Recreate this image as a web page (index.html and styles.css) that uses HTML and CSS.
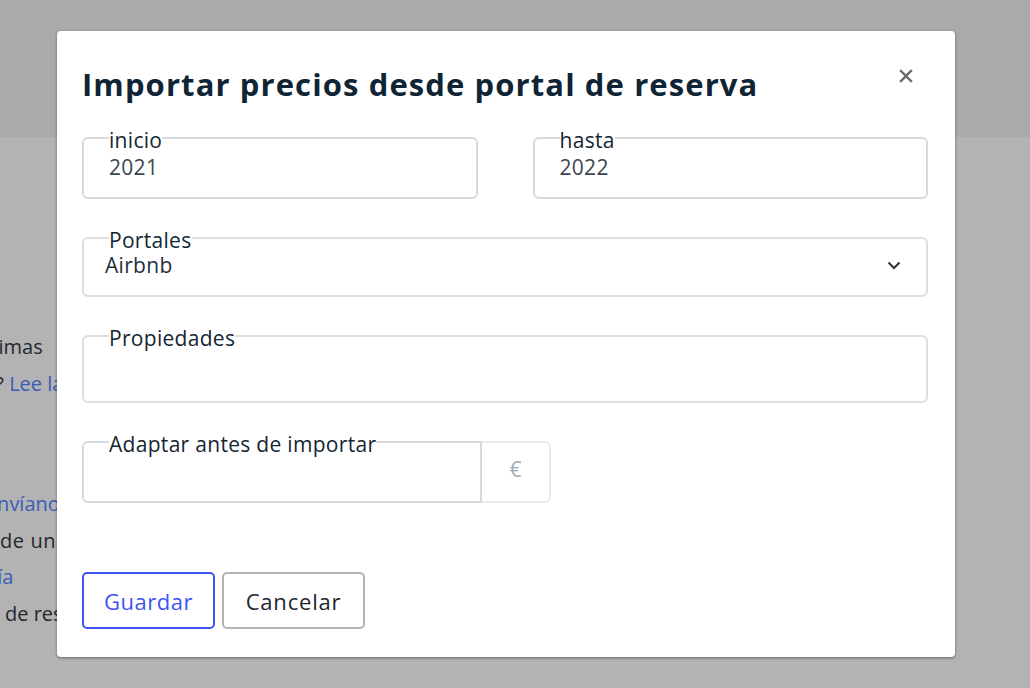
FILE: index.html
```html
<!DOCTYPE html>
<html lang="es">
<head>
<meta charset="utf-8">
<title>Importar precios</title>
<link rel="stylesheet" href="styles.css">
</head>
<body>
<div class="page">
  <div class="page-top"></div>
  <div class="page-body">
    <p class="bg-line l1">mínimas y máximas</p>
    <p class="bg-line l2">¿Dudas? <a class="bg-link">Lee la guía</a></p>
    <p class="bg-line l3"><a class="bg-link">Envíanos un mensaje</a></p>
    <p class="bg-line l4">de una propiedad</p>
    <p class="bg-line l5"><a class="bg-link">guía</a></p>
    <p class="bg-line l6">de reserva</p>
  </div>
</div>

<div class="modal">
  <div class="modal-header">
    <h1 class="modal-title">Importar precios desde portal de reserva</h1>
    <button class="close" type="button" aria-label="Cerrar">
      <svg width="14" height="14" viewBox="0 0 14 14"><path d="M2 2 L12 12 M12 2 L2 12" stroke="#6b6b6b" stroke-width="2.4" stroke-linecap="square"/></svg>
    </button>
  </div>

  <div class="row r1">
    <fieldset class="field f62">
      <legend>inicio</legend>
      <div class="value">2021</div>
    </fieldset>
    <fieldset class="field f62">
      <legend>hasta</legend>
      <div class="value">2022</div>
    </fieldset>
  </div>

  <div class="row r2">
    <fieldset class="field select">
      <legend>Portales</legend>
      <div class="value sel">Airbnb</div>
      <svg class="chev" width="14" height="9" viewBox="0 0 14 9"><path d="M1.5 1.5 L7 7 L12.5 1.5" fill="none" stroke="#333" stroke-width="2"/></svg>
    </fieldset>
  </div>

  <div class="row r3">
    <fieldset class="field tall">
      <legend>Propiedades</legend>
      <div class="value"></div>
    </fieldset>
  </div>

  <div class="row r4">
    <fieldset class="field f62 adapt">
      <legend>Adaptar antes de importar</legend>
      <div class="value"></div>
    </fieldset>
    <div class="addon">€</div>
  </div>

  <div class="actions">
    <button class="btn primary" type="button">Guardar</button>
    <button class="btn secondary" type="button">Cancelar</button>
  </div>
</div>
</body>
</html>
```

FILE: styles.css
```css
* { box-sizing: border-box; }
html, body { margin: 0; padding: 0; }
body {
  width: 1030px;
  height: 688px;
  overflow: hidden;
  background: #b3b3b3;
  font-family: "Open Sans", "Liberation Sans", sans-serif;
  position: relative;
}
.page { width: 1030px; height: 688px; overflow: hidden; }
.page-top { height: 137px; background: #aaaaaa; }
.page-body { padding-top: 192px; }
.bg-line {
  margin: 0;
  height: 36.6px;
  line-height: 36px;
  font-size: 20px;
  color: #1f2830;
  white-space: nowrap;
}
.bg-link { color: #3b5cb8; }
.l1 { text-indent: -142px; }
.l2 { text-indent: -73px; }
.l3 { margin-top: 84px; text-indent: -14px; }
.l4 { text-indent: 0; letter-spacing: 0.6px; }
.l5 { text-indent: -26px; }
.l6 { text-indent: 5px; }

.modal {
  position: absolute;
  left: 57px;
  top: 31px;
  width: 898px;
  height: 626px;
  background: #fff;
  border-radius: 4px;
  box-shadow: 0 1px 3px rgba(0,0,0,0.45);
  padding: 0 27px 0 25px;
}
.modal-header {
  display: flex;
  justify-content: space-between;
  align-items: flex-start;
  padding-top: 53px;
  height: 95px;
}
.modal-title {
  margin: 0;
  font-size: 31px;
  font-weight: 700;
  color: #0f2535;
  letter-spacing: 1.1px;
  line-height: 0;
}
.close {
  border: 0;
  background: none;
  padding: 0;
  margin: -15px 15px 0 0;
  width: 14px;
  height: 14px;
  display: flex;
}

.row { display: flex; align-items: flex-start; }
.r1 { gap: 55px; height: 100px; }
.r1 .field { flex: 1; }
.r2 { height: 98px; }
.r3 { height: 106px; }
.r4 { height: 142px; }

.field {
  margin: 0;
  border: 2px solid #d6dadf;
  border-radius: 6px;
  padding: 0 26px 0 25px;
  min-width: 0;
  position: relative;
}
.f62 { height: 73px; }
.field legend {
  font-size: 21px;
  letter-spacing: 0.3px;
  color: #142633;
  padding: 4px 0 0 0;
  margin-left: 0;
  line-height: 20px;
  height: 24px;
}
.value {
  font-size: 21px;
  letter-spacing: 0.3px;
  color: #3d4650;
  line-height: 22px;
  padding-top: 6px;
}
.select { flex: 1; height: 71px; border-color: #dedede; }
.value.sel { color: #25303a; margin-left: -4px; padding-top: 6px; line-height: 18px; }
.chev { position: absolute; right: 25px; top: 11px; }
.tall { flex: 1; height: 79px; border-color: #dedede; }
.adapt { width: 400px; flex: none; border-radius: 6px 0 0 6px; }
.addon {
  width: 69px;
  height: 62px;
  margin-top: 11px;
  border: 2px solid #e8ebee;
  border-left: 0;
  border-radius: 0 6px 6px 0;
  color: #a6abb0;
  font-size: 21px;
  display: flex;
  align-items: center;
  justify-content: center;
  padding-bottom: 6px;
}
.actions { display: flex; gap: 7px; }
.btn {
  font-family: "Open Sans", "Liberation Sans", sans-serif;
  font-size: 22px;
  letter-spacing: 0.5px;
  height: 57px;
  padding: 0;
  background: #fff;
  border: 2px solid #b4b4b4;
  border-radius: 5px;
  color: #1c252d;
}
.btn.primary {
  border-color: #3d55f5;
  color: #3e55f0;
  width: 133px;
}
.btn.secondary { width: 143px; letter-spacing: 0.8px; }
```
